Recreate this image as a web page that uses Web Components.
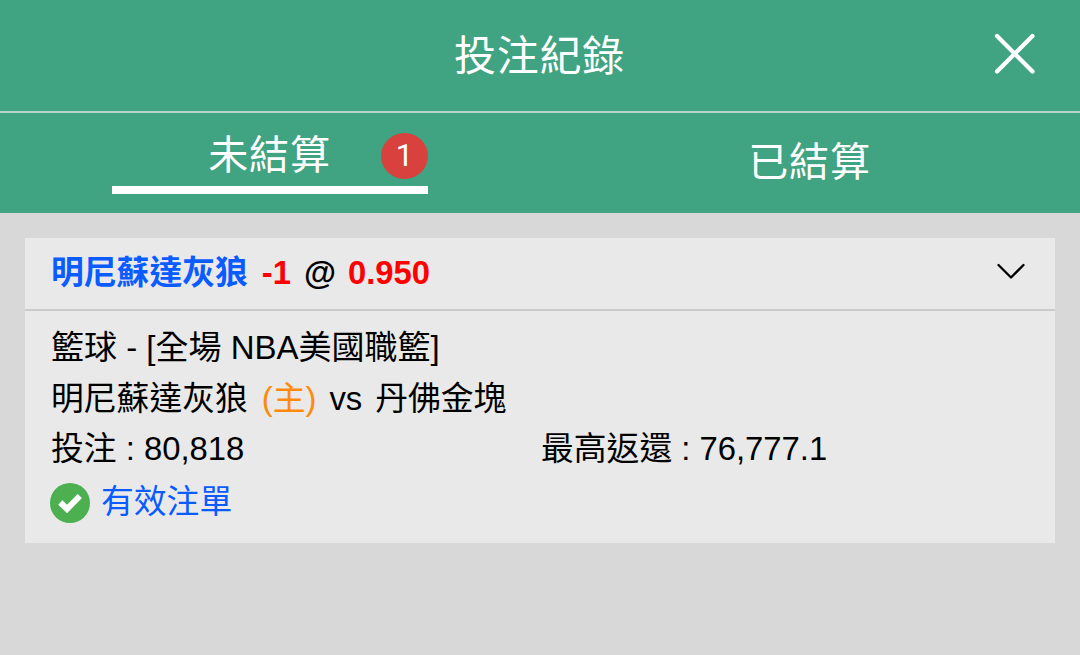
<!DOCTYPE html>
<html lang="zh-Hant">
<head>
<meta charset="utf-8">
<title>投注紀錄</title>
<style>
    body {
        margin: 0;
        background: #d8d8d8;
        font-family: "Liberation Sans", "Noto Sans CJK TC", sans-serif;
    }
</style>
</head>
<body>
<bet-history>
    <page-header>投注紀錄</page-header>
    <tab-bar>
        <tab-item active count="1">未結算</tab-item>
        <tab-item>已結算</tab-item>
    </tab-bar>
    <bet-card>
        <bet-pick slot="pick" handicap="-1" odds="0.950">明尼蘇達灰狼</bet-pick>
        <bet-row class="league">籃球 - [全場 NBA美國職籃]</bet-row>
        <bet-match home="明尼蘇達灰狼" away="丹佛金塊"></bet-match>
        <bet-row>投注 : 80,818<span slot="end">最高返還 : 76,777.1</span></bet-row>
        <bet-status>有效注單</bet-status>
    </bet-card>
</bet-history>

<script>
class BaseElement extends HTMLElement {
    constructor() {
        super();
        this.attachShadow({ mode: 'open' });
    }

    connectedCallback() {
        this.shadowRoot.innerHTML = this.template();
    }
}

class BetHistory extends BaseElement {
    template() {
        return `
            <style>
                :host {
                    display: flex;
                    flex-direction: column;
                    height: 655px;
                    overflow: hidden;
                    background: #d8d8d8;
                }
            </style>
            <slot></slot>
        `;
    }
}

class PageHeader extends BaseElement {
    template() {
        return `
            <style>
                :host {
                    display: grid;
                    grid-template-columns: 90px 1fr 90px;
                    align-items: center;
                    box-sizing: border-box;
                    height: 113px;
                    padding-bottom: 3px;
                    border-bottom: 2px solid #b9d2c7;
                    background: #40a381;
                    color: #fff;
                }
                h1 {
                    grid-column: 2;
                    margin: 0;
                    padding: 5px 1px 0 0;
                    text-align: center;
                    font-size: 42px;
                    line-height: 60px;
                    font-weight: 400;
                    letter-spacing: 0.8px;
                }
                button {
                    display: flex;
                    padding: 0;
                    border: none;
                    background: none;
                    color: inherit;
                }
                svg {
                    width: 48px;
                    height: 48px;
                    fill: none;
                    stroke: currentColor;
                    stroke-width: 4.2;
                    stroke-linecap: round;
                }
            </style>
            <h1><slot></slot></h1>
            <button aria-label="Close">
                <svg viewBox="0 0 48 48"><path d="M7 6L42.500 41.500M42.500 6L7 41.500"/></svg>
            </button>
        `;
    }
}

class TabBar extends BaseElement {
    template() {
        return `
            <style>
                :host {
                    display: grid;
                    grid-template-columns: 1fr 1fr;
                    justify-items: center;
                    height: 100px;
                    background: #40a381;
                    color: #fff;
                }
            </style>
            <slot></slot>
        `;
    }
}

class TabItem extends BaseElement {
    template() {
        const count = this.getAttribute('count');

        return `
            <style>
                :host {
                    display: grid;
                    place-items: center;
                    position: relative;
                    box-sizing: border-box;
                    width: 316px;
                    height: 98px;
                    padding-right: 1px;
                    font-size: 40px;
                    line-height: 58px;
                    font-weight: 400;
                    letter-spacing: 0.8px;
                }
                :host([active]) {
                    height: 81px;
                    border-bottom: 8px solid #fff;
                    padding-top: 11px;
                }
                .badge {
                    position: absolute;
                    right: 0;
                    top: 20px;
                    width: 47px;
                    height: 46px;
                    border-radius: 50%;
                    background: #d8413d;
                    font-family: Roboto, "Liberation Sans", sans-serif;
                    font-size: 31px;
                    line-height: 46px;
                    text-align: center;
                    letter-spacing: 0;
                }
            </style>
            <span><slot></slot></span>
            ${count ? `<span class="badge">${count}</span>` : ''}
        `;
    }
}

class BetCard extends BaseElement {
    template() {
        return `
            <style>
                :host {
                    display: block;
                    margin: 25px 25px 0;
                    background: #e9e9e9;
                    color: #000;
                    font-size: 32.8px;
                }
                header {
                    display: flex;
                    align-items: center;
                    justify-content: space-between;
                    box-sizing: border-box;
                    height: 73px;
                    padding: 0 30px 1px 26px;
                    border-bottom: 2px solid #cacaca;
                }
                header svg {
                    width: 28px;
                    height: 16px;
                    margin-top: -5px;
                    fill: none;
                    stroke: currentColor;
                    stroke-width: 2.3;
                    stroke-linecap: round;
                    stroke-linejoin: round;
                }
                .body {
                    display: flex;
                    flex-direction: column;
                    box-sizing: border-box;
                    height: 232px;
                    padding: 12px 26px 0;
                }
                ::slotted(.league) { font-size: 33px; }
            </style>
            <header>
                <slot name="pick"></slot>
                <svg viewBox="0 0 28 16"><path d="M1.500 2L14 14.500L26.500 2"/></svg>
            </header>
            <div class="body"><slot></slot></div>
        `;
    }
}

class BetPick extends BaseElement {
    template() {
        return `
            <style>
                :host {
                    display: flex;
                    font-weight: bold;
                    line-height: 50px;
                    white-space: nowrap;
                }
                .team { color: #0a5cff; }
                .num { color: #f00; }
                .handicap { margin-left: 14px; }
                .at { margin: 0 12px 0 13px; }
            </style>
            <span class="team"><slot></slot></span>
            <span class="num handicap">${this.getAttribute('handicap')}</span>
            <span class="at">@</span>
            <span class="num">${this.getAttribute('odds')}</span>
        `;
    }
}

class BetRow extends BaseElement {
    template() {
        return `
            <style>
                :host {
                    display: grid;
                    grid-template-columns: 490px 1fr;
                    line-height: 50px;
                    font-weight: 400;
                    white-space: nowrap;
                }
            </style>
            <span><slot></slot></span>
            <span><slot name="end"></slot></span>
        `;
    }
}

class BetMatch extends BaseElement {
    template() {
        return `
            <style>
                :host {
                    display: flex;
                    line-height: 51px;
                    font-weight: 400;
                    white-space: nowrap;
                }
                .home { color: #ff8a0c; margin: 0 13px 0 14px; }
                .vs { margin-right: 13px; }
            </style>
            <span>${this.getAttribute('home')}</span>
            <span class="home">(主)</span>
            <span class="vs">vs</span>
            <span>${this.getAttribute('away')}</span>
        `;
    }
}

class BetStatus extends BaseElement {
    template() {
        return `
            <style>
                :host {
                    display: flex;
                    align-items: center;
                    gap: 11px;
                    margin-top: 2px;
                    line-height: 51px;
                    font-weight: 400;
                    color: #0a5cff;
                }
                svg {
                    width: 40px;
                    height: 40px;
                    margin: 2px 0 0 -1px;
                }
            </style>
            <svg viewBox="0 0 40 40">
                <circle cx="20" cy="20" r="20" fill="#4caf50"/>
                <path d="M10.300 19.500L17 26L29.800 13" fill="none" stroke="#fff" stroke-width="6"/>
            </svg>
            <span><slot></slot></span>
        `;
    }
}

customElements.define('bet-history', BetHistory);
customElements.define('page-header', PageHeader);
customElements.define('tab-bar', TabBar);
customElements.define('tab-item', TabItem);
customElements.define('bet-card', BetCard);
customElements.define('bet-pick', BetPick);
customElements.define('bet-row', BetRow);
customElements.define('bet-match', BetMatch);
customElements.define('bet-status', BetStatus);
</script>
</body>
</html>
